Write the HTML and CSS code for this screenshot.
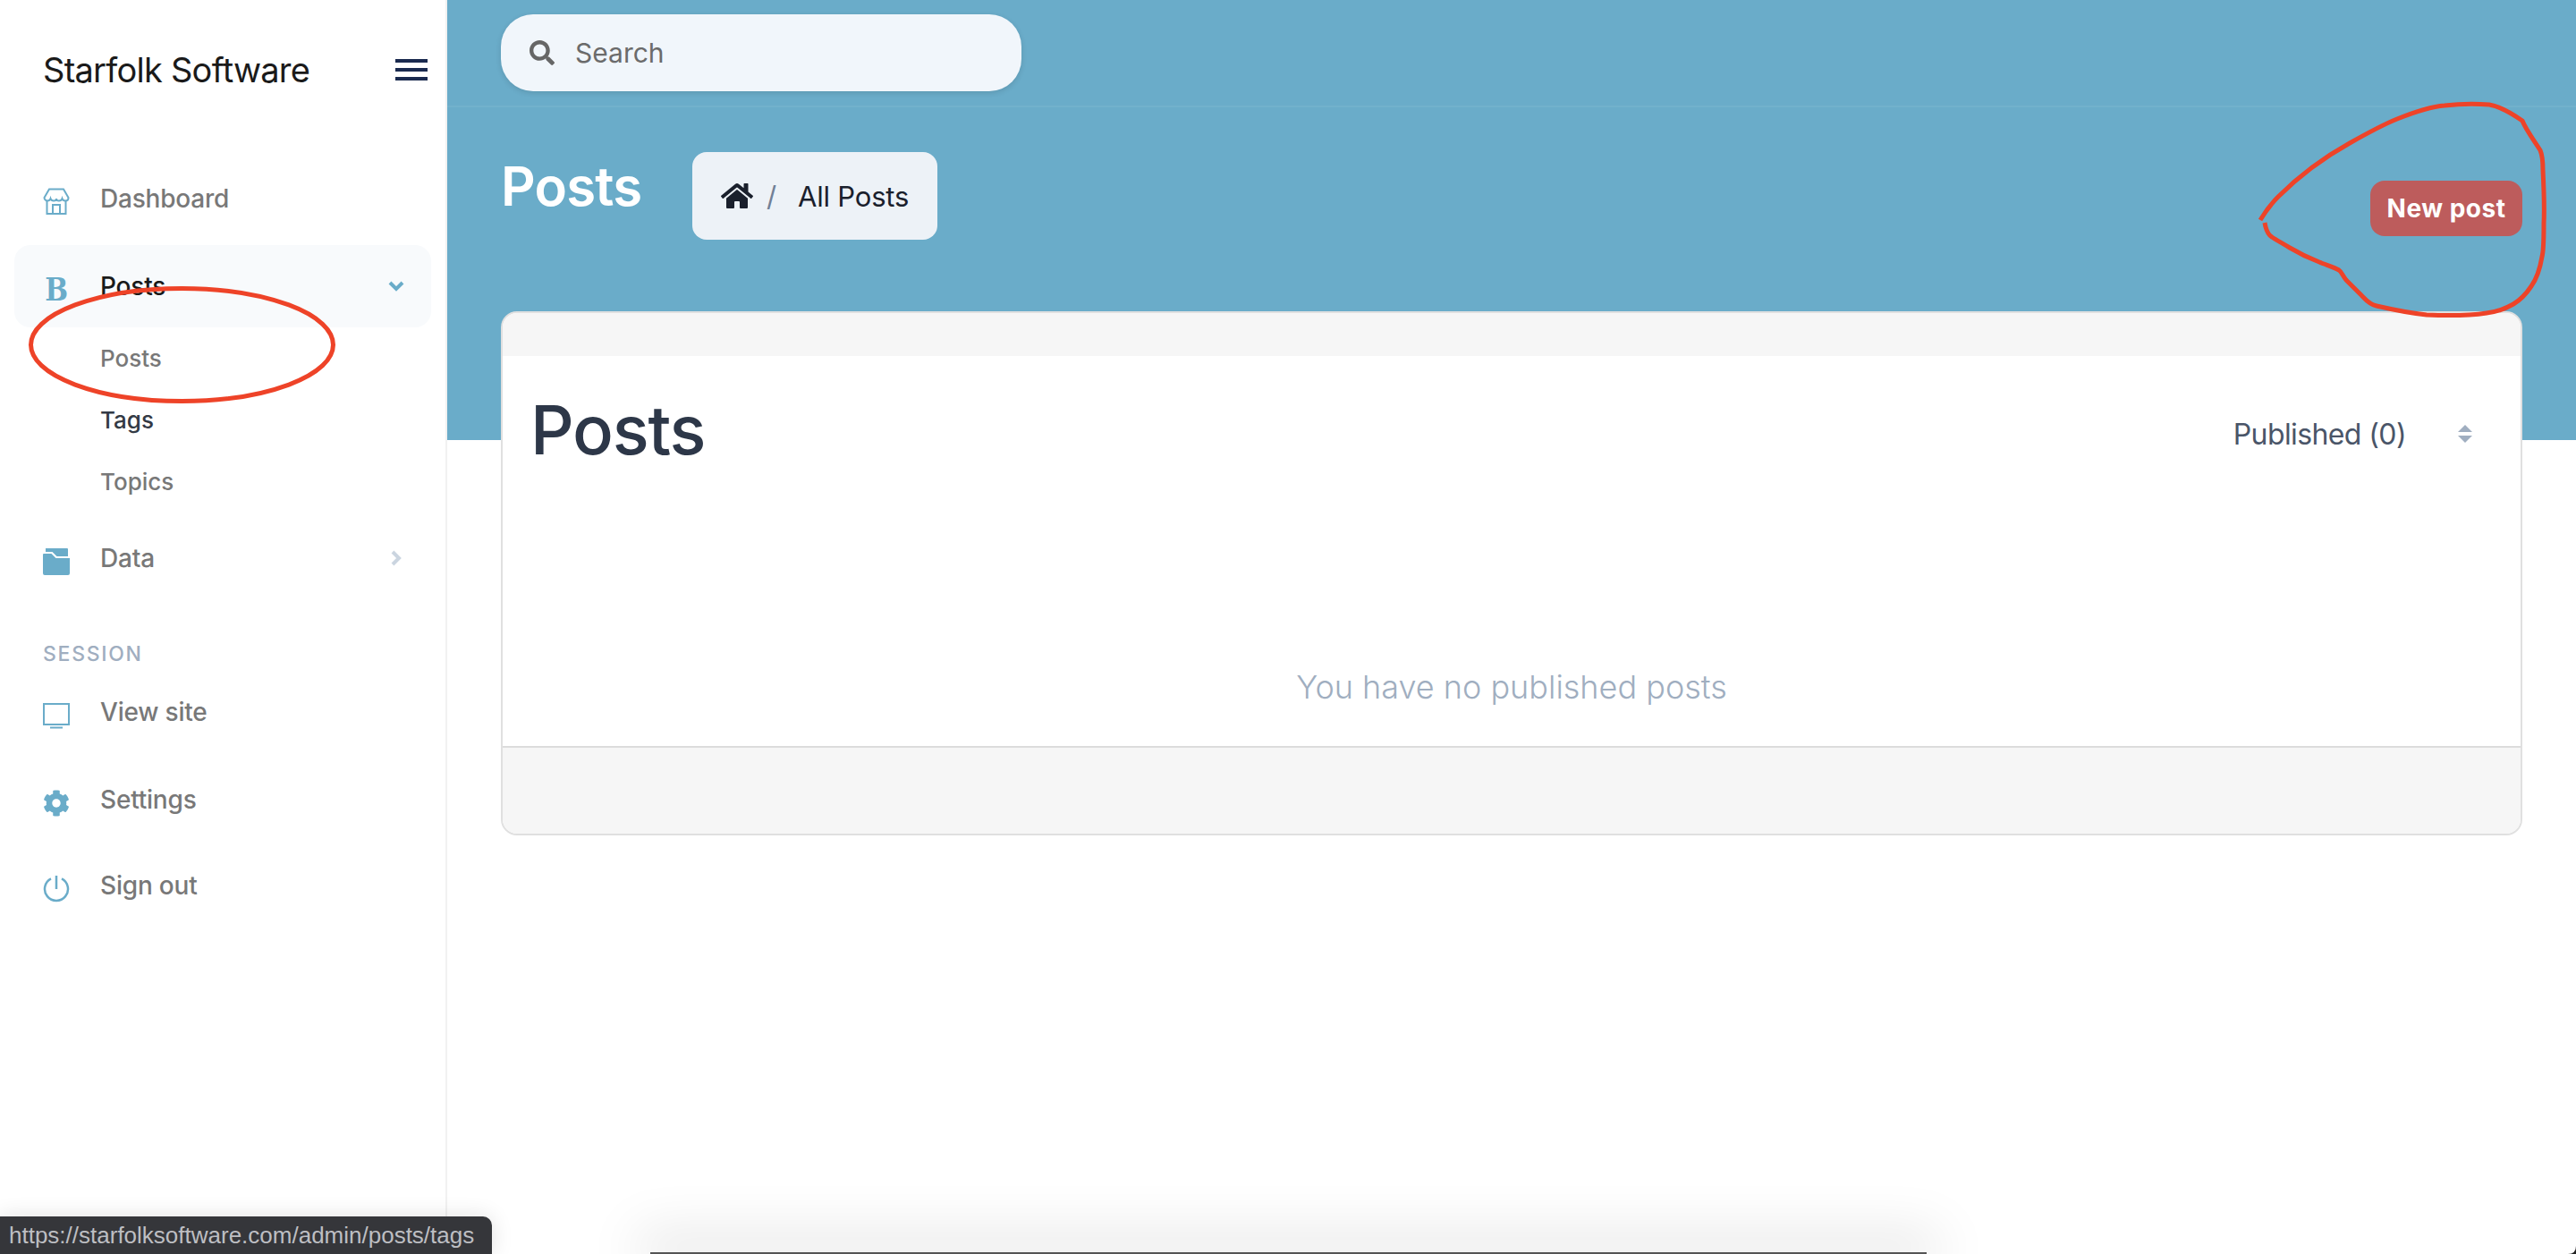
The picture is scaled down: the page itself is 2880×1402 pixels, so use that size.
FILE: index.html
```html
<html>
<head>
<title>Starfolk Software || Posts</title>
<link rel="stylesheet" href="styles.css">
</head>

<body>
	<aside class="sidebar">
		<div class="brand">
			<span class="brand-name">Starfolk Software</span>
			<span class="burger"><i></i><i></i><i></i></span>
		</div>

		<nav class="nav">
			<a class="nav-row high-icon">
				<svg class="nav-icon" viewBox="0 0 30 30" fill="none" stroke="#6aacc9" stroke-width="2">
					<path d="M7 1.5h16l5.500 9.500c0 2-1.500 3.500-3.500 3.500s-3-1-3.500-2.500c-.5 1.500-2 2.500-3.500 2.500s-3-1-3-2.500c0 1.500-1.500 2.500-3 2.500s-3-1-3.500-2.500c-.5 1.500-2 2.500-3.500 2.500s-3.500-1.500-3.500-3.500z"/>
					<path d="M4.500 15v14h21V15M11 29V19h8v10"/>
				</svg>
				<span>Dashboard</span>
			</a>

			<a class="nav-row active high-icon">
				<span class="nav-icon bold-icon">B</span>
				<span>Posts</span>
				<svg class="chevron" viewBox="0 0 18 12" fill="none" stroke="#6aacc9" stroke-width="4"><path d="M2 2l7 7 7-7"/></svg>
			</a>
			<div class="subnav">
				<a class="sub-row muted">Posts</a>
				<a class="sub-row">Tags</a>
				<a class="sub-row muted">Topics</a>
			</div>

			<a class="nav-row">
				<svg class="nav-icon" viewBox="0 0 30 30" fill="#6aacc9">
					<path d="M3 0h24q1 0 1 1v8H15.500l-5-5H3z"/>
					<path d="M0 7q0-1 1-1h8.500l5 5H30v17q0 2-2 2H2q-2 0-2-2z"/>
				</svg>
				<span>Data</span>
				<svg class="chevron" viewBox="0 0 18 18" fill="none" stroke="#cbd5e0" stroke-width="4"><path d="M5 2l7 7-7 7"/></svg>
			</a>

			<div class="nav-label">SESSION</div>

			<a class="nav-row">
				<svg class="nav-icon" viewBox="0 0 30 30" fill="none" stroke="#6aacc9" stroke-width="2">
					<path d="M1 2h28v23H1zM8 28.500h14"/>
				</svg>
				<span>View site</span>
			</a>
			<a class="nav-row">
				<svg class="nav-icon" viewBox="0 0 512 512" fill="#6aacc9">
					<path d="M487.400 315.700l-42.600-24.600c4.300-23.200 4.300-47 0-70.200l42.600-24.600c4.900-2.800 7.100-8.600 5.500-14-11.100-35.600-30-67.800-54.700-94.600-3.800-4.100-10-5.100-14.800-2.300L380.800 110c-17.900-15.400-38.500-27.300-60.800-35.100V25.800c0-5.600-3.900-10.500-9.400-11.700-36.700-8.200-74.300-7.800-109.200 0-5.500 1.200-9.400 6.100-9.400 11.700V75c-22.200 7.900-42.800 19.800-60.800 35.100L88.700 85.500c-4.900-2.800-11-1.900-14.800 2.300-24.700 26.700-43.600 58.900-54.700 94.600-1.700 5.400.6 11.200 5.500 14L67.300 221c-4.300 23.200-4.300 47 0 70.200l-42.600 24.600c-4.900 2.800-7.100 8.600-5.500 14 11.100 35.600 30 67.800 54.700 94.600 3.800 4.100 10 5.100 14.800 2.300l42.600-24.600c17.900 15.400 38.500 27.300 60.800 35.100v49.200c0 5.600 3.900 10.500 9.400 11.700 36.700 8.200 74.300 7.800 109.200 0 5.500-1.200 9.400-6.100 9.400-11.700v-49.200c22.200-7.900 42.800-19.800 60.800-35.100l42.600 24.600c4.900 2.800 11 1.900 14.800-2.300 24.700-26.700 43.600-58.900 54.700-94.600 1.500-5.500-.7-11.300-5.600-14.100zM256 336c-44.100 0-80-35.900-80-80s35.900-80 80-80 80 35.900 80 80-35.900 80-80 80z"/>
				</svg>
				<span>Settings</span>
			</a>
			<a class="nav-row">
				<svg class="nav-icon" viewBox="0 0 30 30" fill="none" stroke="#6aacc9" stroke-width="2.500">
					<path d="M9 3.400a13 13 0 1 0 12 0M15 0v15"/>
				</svg>
				<span>Sign out</span>
			</a>
		</nav>
	</aside>

	<main class="main">
		<div class="hero">
			<div class="topbar">
				<div class="search">
					<svg class="search-icon" viewBox="0 0 512 512" fill="#666">
						<path d="M505 442.700L405.300 343c-4.500-4.500-10.600-7-17-7H372c27.600-35.300 44-79.700 44-128C416 93.100 322.900 0 208 0S0 93.100 0 208s93.100 208 208 208c48.300 0 92.700-16.400 128-44v16.300c0 6.400 2.500 12.500 7 17l99.700 99.700c9.400 9.400 24.600 9.400 33.900 0l28.300-28.300c9.400-9.400 9.400-24.600.1-34zM208 336c-70.700 0-128-57.200-128-128 0-70.700 57.200-128 128-128 70.700 0 128 57.200 128 128 0 70.700-57.200 128-128 128z"/>
					</svg>
					<span>Search</span>
				</div>
			</div>
			<div class="page-head">
				<h1>Posts</h1>
				<div class="crumbs">
					<svg class="home-icon" viewBox="0 0 576 512" fill="#1a202c">
						<path d="M280.370 148.260L96 300.110V464a16 16 0 0 0 16 16l112.060-.29a16 16 0 0 0 15.920-16V368a16 16 0 0 1 16-16h64a16 16 0 0 1 16 16v95.640a16 16 0 0 0 16 16.050L464 480a16 16 0 0 0 16-16V300L295.670 148.260a12.190 12.190 0 0 0-15.300 0zM571.600 251.470L488 182.560V44.050a12 12 0 0 0-12-12h-56a12 12 0 0 0-12 12v72.610L318.470 43a48 48 0 0 0-61 0L4.340 251.470a12 12 0 0 0-1.600 16.900l25.500 31A12 12 0 0 0 45.150 301l235.220-193.740a12.190 12.190 0 0 1 15.300 0L530.900 301a12 12 0 0 0 16.900-1.600l25.500-31a12 12 0 0 0-1.700-16.930z"/>
					</svg>
					<span class="crumb-sep">/</span>
					<span>All Posts</span>
				</div>
				<a class="btn-new">New post</a>
			</div>
		</div>

		<section class="card">
			<div class="card-head"></div>
			<div class="card-body">
				<div class="card-title">
					<h2>Posts</h2>
					<div class="filter">
						<span>Published (0)</span>
						<svg class="sort-icon" viewBox="0 0 16 20" fill="#a0aec0"><path d="M8 0l8 8H0zM0 12h16l-8 8z"/></svg>
					</div>
				</div>
				<p class="empty">You have no published posts</p>
			</div>
			<div class="card-foot"></div>
		</section>
	</main>

	<!-- hand drawn marks on top of the screenshot -->
	<svg class="marks" viewBox="0 0 2880 1402" fill="none" stroke="#ee4328" stroke-width="5" stroke-linecap="butt">
		<ellipse cx="203.500" cy="385.500" rx="169" ry="63"/>
		<path d="M2527 246C2533 236 2540 227 2547 220C2572 195 2600 175 2627 160C2650 147 2665 139 2680 133C2700 125 2720 119 2733 118C2750 116 2770 116 2783 117C2795 119 2810 128 2820 135C2824 145 2835 160 2840 168C2843 175 2843 185 2843 190C2844 210 2845 230 2844 250C2844 270 2844 280 2842 287C2839 305 2835 313 2830 320C2822 332 2815 337 2810 340C2798 347 2788 349 2780 350C2760 353 2735 353 2713 352C2695 350 2670 345 2657 342C2648 340 2644 334 2640 330C2632 322 2628 318 2623 313C2619 308 2618 304 2615 302C2610 299 2600 296 2593 293C2580 288 2570 283 2560 277C2552 272 2546 269 2540 265C2535 262 2533 255 2532 249"/>
		<path d="M2880 1393Q2880 1402 2871 1402H2880Z" fill="#222" stroke="none"/>
	</svg>

	<div class="dock"></div>
	<div class="status-link">https://starfolksoftware.com/admin/posts/tags</div>
</body>
</html>
```

FILE: styles.css
```css
* {
	box-sizing: border-box;
}

html, body {
	height: 100%;
}

body {
	margin: 0px;
	height: 1402px;
	display: flex;
	position: relative;
	overflow: hidden;
	background: white;
	font-family: Inter, "Liberation Sans", sans-serif;
}

/* sidebar */
.sidebar {
	width: 500px;
	flex-shrink: 0;
	border-right: 2px solid #f1f1f1;
}

.brand {
	height: 156px;
	padding: 0 20px 0 48px;
	display: flex;
	align-items: center;
	justify-content: space-between;
}

.brand-name {
	font-size: 38px;
	letter-spacing: -.75px;
	color: #1a1a1a;
}

.burger {
	width: 36px;
	display: flex;
	flex-direction: column;
	gap: 6px;
}

.burger i {
	height: 4px;
	background: #1a2a4f;
}

.nav {
	margin-top: 20px;
	display: flex;
	flex-direction: column;
	gap: 6px;
}

.nav-row {
	height: 92px;
	margin: 0 16px;
	padding: 0 30px 0 32px;
	border-radius: 18px;
	display: flex;
	align-items: center;
	gap: 34px;
	font-size: 28px;
	font-weight: 500;
	letter-spacing: -.2px;
	color: #787878;
}

.nav-row:last-child {
	margin-top: -2px;
}

.nav-row.active {
	background: #f8fafc;
	color: #1a1a1a;
}

.nav-icon {
	width: 30px;
	height: 30px;
	margin-top: 7px;
	flex-shrink: 0;
}

.high-icon .nav-icon {
	margin-top: 5px;
}

.bold-icon {
	font-family: "DejaVu Serif", serif;
	font-size: 36px;
	font-weight: bold;
	line-height: 30px;
	text-align: center;
	color: #6aacc9;
	transform: scaleX(.85);
}

.chevron {
	width: 18px;
	height: 18px;
	margin-left: auto;
}

.subnav {
	margin: -6px 0 -1px;
	padding-left: 112px;
}

.sub-row {
	display: block;
	height: 69px;
	line-height: 69px;
	font-size: 26px;
	font-weight: 500;
	color: #333a45;
}

.sub-row.muted {
	color: #787878;
}

.nav-label {
	margin: 43px 0 0 48px;
	height: 25px;
	line-height: 25px;
	font-size: 23px;
	font-weight: 500;
	letter-spacing: 1.700px;
	color: #a0aec0;
}

/* main area */
.main {
	flex: 1;
	min-width: 0;
}

.hero {
	height: 492px;
	background: #6aacc9;
}

.topbar {
	height: 120px;
	padding: 16px 60px 0;
	border-bottom: 2px solid #72b1cc;
}

.search {
	width: 582px;
	height: 86px;
	padding-left: 32px;
	border-radius: 36px;
	background: #f1f6fb;
	box-shadow: 0 2px 6px rgba(0, 0, 0, .12);
	display: flex;
	align-items: center;
	gap: 23px;
	font-size: 30px;
	color: #6b6b6b;
}

.search-icon {
	width: 28px;
	height: 28px;
}

.page-head {
	padding: 50px 60px 0;
	display: flex;
	align-items: flex-start;
}

h1 {
	width: 156px;
	margin: 2px 58px 0 0;
	font-size: 60px;
	line-height: 72px;
	font-weight: 600;
	letter-spacing: -.8px;
	color: white;
}

.crumbs {
	width: 274px;
	height: 98px;
	padding-left: 32px;
	border-radius: 16px;
	background: #edf2f7;
	display: flex;
	align-items: center;
	font-size: 31px;
	letter-spacing: -.2px;
	color: #1a202c;
}

.home-icon {
	width: 36px;
	height: 32px;
}

.crumb-sep {
	margin: 0 24px 0 15px;
	color: #718096;
}

.btn-new {
	margin: 32px 0 0 auto;
	width: 170px;
	height: 62px;
	line-height: 62px;
	text-align: center;
	border-radius: 16px;
	background: #bd5c5c;
	font-size: 28px;
	font-weight: 700;
	letter-spacing: .5px;
	color: white;
}

.card {
	margin: -144px 60px 0;
	border: 2px solid #e0e0e0;
	border-radius: 18px;
	background: white;
	overflow: hidden;
}

.card-head {
	height: 48px;
	background: #f6f6f6;
}

.card-body {
	height: 436px;
	padding: 0 31px;
}

.card-title {
	height: 164px;
	display: flex;
	align-items: center;
	justify-content: space-between;
}

h2 {
	margin: 0;
	font-size: 76px;
	font-weight: 500;
	letter-spacing: -1.200px;
	color: #2d3748;
}

.filter {
	margin-top: 10px;
	padding-right: 23px;
	display: flex;
	align-items: center;
	gap: 58px;
	font-size: 32px;
	letter-spacing: -.6px;
	color: #4a5568;
}

.sort-icon {
	width: 16px;
	height: 20px;
}

.empty {
	margin: 184px 0 0;
	text-align: center;
	font-size: 36px;
	font-weight: 300;
	color: #a0aec0;
}

.card-foot {
	height: 98px;
	border-top: 2px solid #dcdcdc;
	background: #f6f6f6;
}

/* things lying over the page */
.marks {
	position: absolute;
	left: 0;
	top: 0;
	width: 2880px;
	height: 1402px;
	pointer-events: none;
}

.dock {
	position: absolute;
	left: 727px;
	bottom: 0;
	width: 1427px;
	height: 2px;
	background: #555;
	box-shadow: 0 -6px 60px 14px rgba(0, 0, 0, .13);
}

.status-link {
	position: absolute;
	left: 0;
	bottom: 0;
	width: 550px;
	height: 42px;
	line-height: 43px;
	padding-left: 10px;
	border-top-right-radius: 10px;
	background: #35363a;
	box-shadow: 0 0 24px rgba(0, 0, 0, .12);
	font-family: "Liberation Sans", sans-serif;
	font-size: 26px;
	color: #bdbec2;
	white-space: nowrap;
}
```
